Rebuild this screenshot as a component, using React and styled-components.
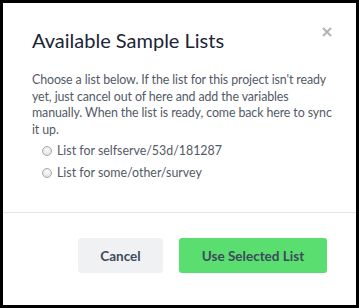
import React, { useState } from "react";
import styled, { createGlobalStyle } from "styled-components";

const GlobalStyle = createGlobalStyle`
  html, body {
    margin: 0;
    padding: 0;
    background: #000;
  }
  * {
    box-sizing: border-box;
  }
`;

const Dialog = styled.div`
  width: 359px;
  height: 308px;
  border: 3px solid #000;
  background: #fff;
  display: flex;
  flex-direction: column;
  font-family: Lato, "Open Sans", sans-serif;
`;

const Header = styled.div`
  position: relative;
  padding: 24px 29px 0 29px;
`;

const Title = styled.h4`
  margin: 0;
  font-size: 20px;
  line-height: 26px;
  font-weight: 400;
  color: #1b2535;
`;

const Close = styled.button`
  position: absolute;
  top: 21px;
  right: 21px;
  border: 0;
  background: none;
  padding: 0;
  width: 16px;
  height: 16px;
  cursor: pointer;
  display: flex;
  align-items: center;
  justify-content: center;
`;

const Body = styled.div`
  padding: 19px 20px 0 29px;
  flex: 1;
`;

const Text = styled.p`
  margin: 0;
  font-size: 12.4px;
  line-height: 16.7px;
  letter-spacing: -0.1px;
  color: #535a66;
`;

const Options = styled.div`
  display: flex;
  flex-direction: column;
  margin-top: 1px;
  padding-left: 10px;
`;

const Option = styled.label`
  display: flex;
  align-items: center;
  gap: 5px;
  height: 22px;
  font-size: 12.4px;
  color: #535a66;
  cursor: pointer;
`;

const Radio = styled.input`
  appearance: none;
  margin: 0;
  width: 10px;
  height: 10px;
  border-radius: 50%;
  border: 1px solid #a9a9a9;
  background: radial-gradient(circle at 50% 35%, #fafafa 0%, #dcdcdc 100%);

  &:checked {
    background: radial-gradient(circle, #444 0 2px, #e8e8e8 3px);
  }
`;

const Footer = styled.div`
  border-top: 1px solid #e5e5e5;
  height: 93px;
  display: flex;
  justify-content: flex-end;
  align-items: flex-start;
  gap: 16px;
  padding: 25px 29px 0 0;
`;

const Button = styled.button`
  height: 35px;
  width: ${(props) => props.$width}px;
  border: 0;
  border-radius: 3px;
  background: ${(props) => (props.$primary ? "#5ade6f" : "#f0f1f3")};
  color: #3d4a5c;
  font-family: Lato, "Liberation Sans", sans-serif;
  font-size: 13.5px;
  font-weight: 700;
  cursor: pointer;
`;

const lists = ["selfserve/53d/181287", "some/other/survey"];

export default function App() {
  const [selected, setSelected] = useState(null);

  return (
    <>
      <GlobalStyle />
      <Dialog>
        <Header>
          <Title>Available Sample Lists</Title>
          <Close aria-label="Close">
            <svg width="10" height="10" viewBox="0 0 10 10">
              <path d="M1 1L9 9M9 1L1 9" stroke="#b3b3b3" strokeWidth="2" />
            </svg>
          </Close>
        </Header>
        <Body>
          <Text>
            Choose a list below. If the list for this project isn't ready yet,
            just cancel out of here and add the variables manually. When the
            list is ready, come back here to sync it up.
          </Text>
          <Options>
            {lists.map((name) => (
              <Option key={name}>
                <Radio
                  type="radio"
                  name="list"
                  checked={selected === name}
                  onChange={() => setSelected(name)}
                />
                List for {name}
              </Option>
            ))}
          </Options>
        </Body>
        <Footer>
          <Button $width={85}>Cancel</Button>
          <Button $width={148} $primary>
            Use Selected List
          </Button>
        </Footer>
      </Dialog>
    </>
  );
}
